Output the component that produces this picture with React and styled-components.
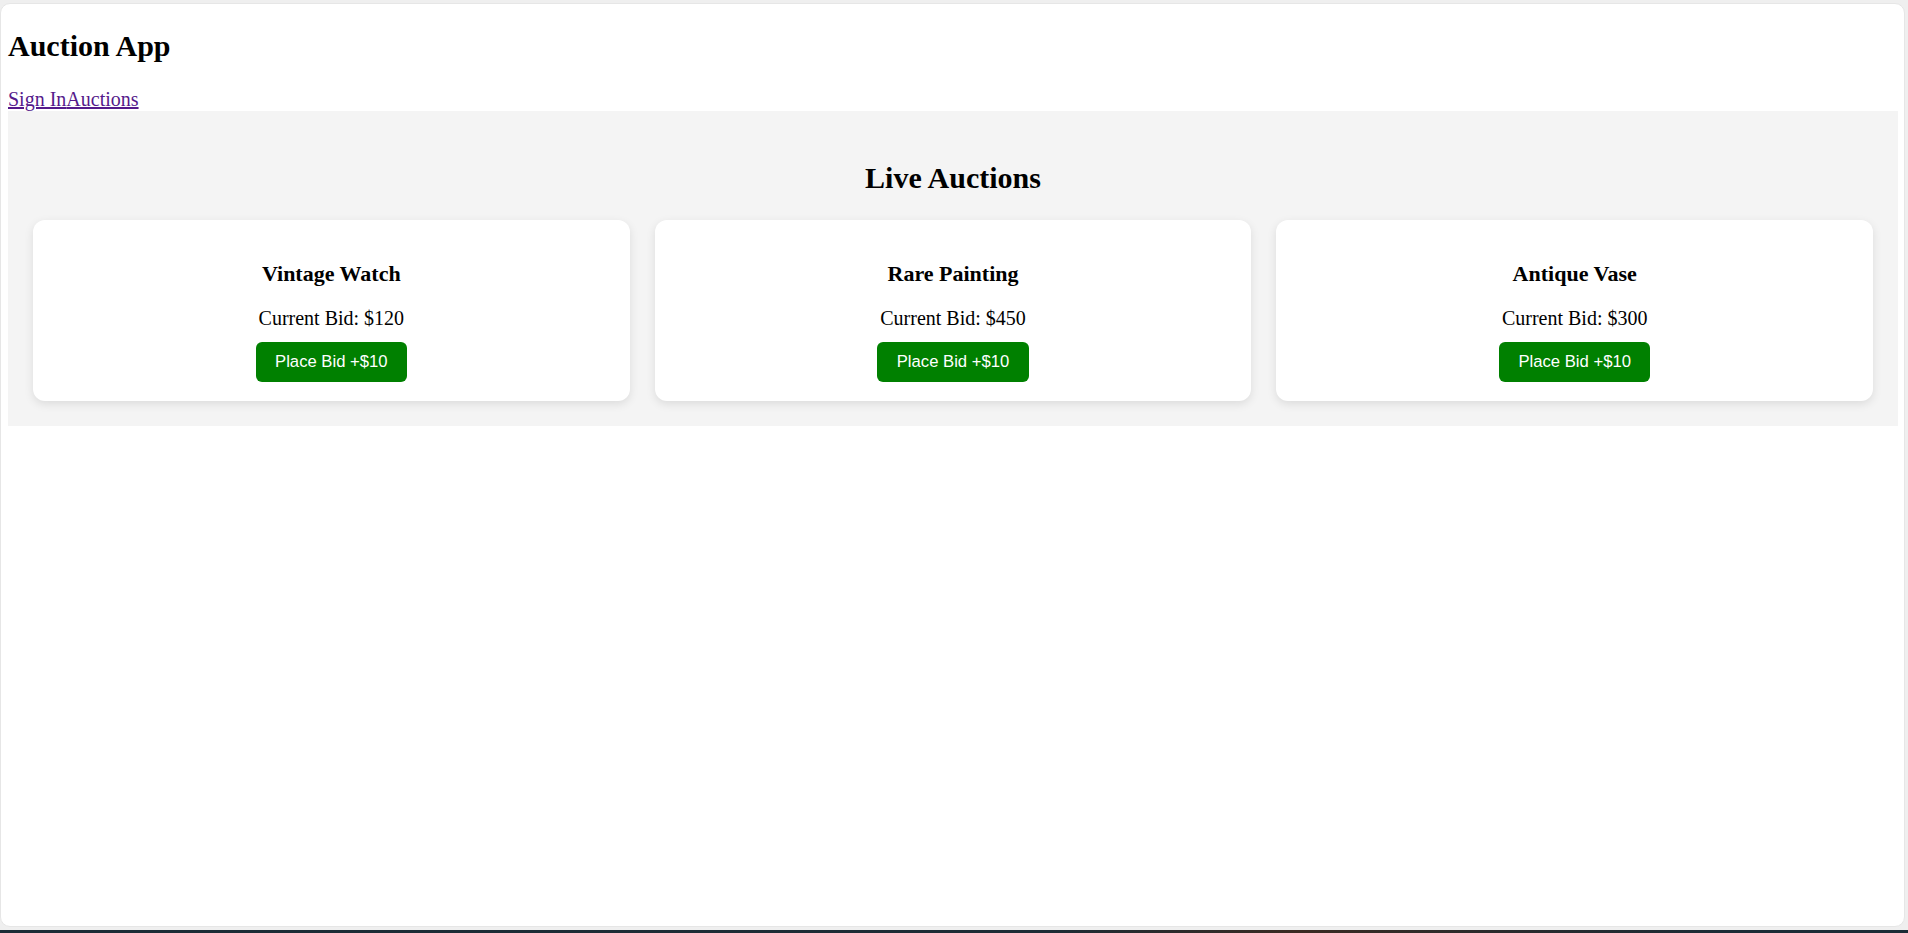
import React from "react";
import styled, { createGlobalStyle } from "styled-components";

const GlobalStyle = createGlobalStyle`
  html, body {
    margin: 0;
    padding: 0;
    height: 100%;
    background: #efefef;
  }
  #root {
    height: 100%;
  }
`;

const Screen = styled.div`
  height: 933px;
  display: flex;
  flex-direction: column;
  box-sizing: border-box;
  padding-top: 3px;
  overflow: hidden;
`;

const Window = styled.div`
  flex: 1;
  margin-right: 3px;
  background: #ffffff;
  border: 1px solid #e6e6e6;
  border-radius: 10px;
  box-sizing: border-box;
  padding: 0 6px 0 7px;
  font-family: "Liberation Serif", "Times New Roman", serif;
  font-size: 20px;
  color: #000;
`;

const Taskbar = styled.div`
  height: 3px;
  margin-top: 3px;
  background: linear-gradient(
    90deg,
    #1b2c36 0%,
    #1c2c35 55%,
    #3a2a22 68%,
    #2a2b2c 78%,
    #1b2c36 90%,
    #1b2c36 100%
  );
`;

const Title = styled.h1`
  margin: 25px 0 25px;
  font-size: 30px;
  font-weight: bold;
`;

const Nav = styled.nav`
  display: block;
`;

const NavLink = styled.a`
  color: #551a8b;
  text-decoration: underline;
  cursor: pointer;
`;

const Section = styled.section`
  background: #f4f4f4;
  padding: 25px;
`;

const SectionTitle = styled.h2`
  margin: 25px 0;
  font-size: 30px;
  font-weight: bold;
  text-align: center;
`;

const Grid = styled.div`
  display: grid;
  grid-template-columns: repeat(3, 1fr);
  gap: 25px;
`;

const Card = styled.div`
  background: #ffffff;
  border-radius: 12px;
  padding: 19px 25px;
  text-align: center;
  box-shadow: 0 3px 10px rgba(0, 0, 0, 0.1);
`;

const CardTitle = styled.h3`
  margin: 22px 0 20px;
  font-size: 22px;
  font-weight: bold;
`;

const Bid = styled.p`
  margin: 20px 0 12px;
  font-size: 20px;
`;

const BidButton = styled.button`
  display: inline-block;
  vertical-align: top;
  background: #008000;
  color: #ffffff;
  border: none;
  border-radius: 6px;
  padding: 10px 19.5px;
  font-family: "Liberation Sans", Arial, sans-serif;
  font-size: 16.67px;
  line-height: 20px;
  cursor: pointer;
`;

const auctions = [
  { id: 1, name: "Vintage Watch", bid: 120 },
  { id: 2, name: "Rare Painting", bid: 450 },
  { id: 3, name: "Antique Vase", bid: 300 },
];

export default function App() {
  const [items, setItems] = React.useState(auctions);
  const placeBid = (id) =>
    setItems((prev) =>
      prev.map((it) => (it.id === id ? { ...it, bid: it.bid + 10 } : it))
    );

  return (
    <>
      <GlobalStyle />
      <Screen>
        <Window>
          <Title>Auction App</Title>
          <Nav>
            <NavLink href="#signin">Sign In</NavLink>
            <NavLink href="#auctions">Auctions</NavLink>
          </Nav>
          <Section>
            <SectionTitle>Live Auctions</SectionTitle>
            <Grid>
              {items.map((it) => (
                <Card key={it.id}>
                  <CardTitle>{it.name}</CardTitle>
                  <Bid>Current Bid: ${it.bid}</Bid>
                  <BidButton onClick={() => placeBid(it.id)}>
                    Place Bid +$10
                  </BidButton>
                </Card>
              ))}
            </Grid>
          </Section>
        </Window>
        <Taskbar />
      </Screen>
    </>
  );
}
